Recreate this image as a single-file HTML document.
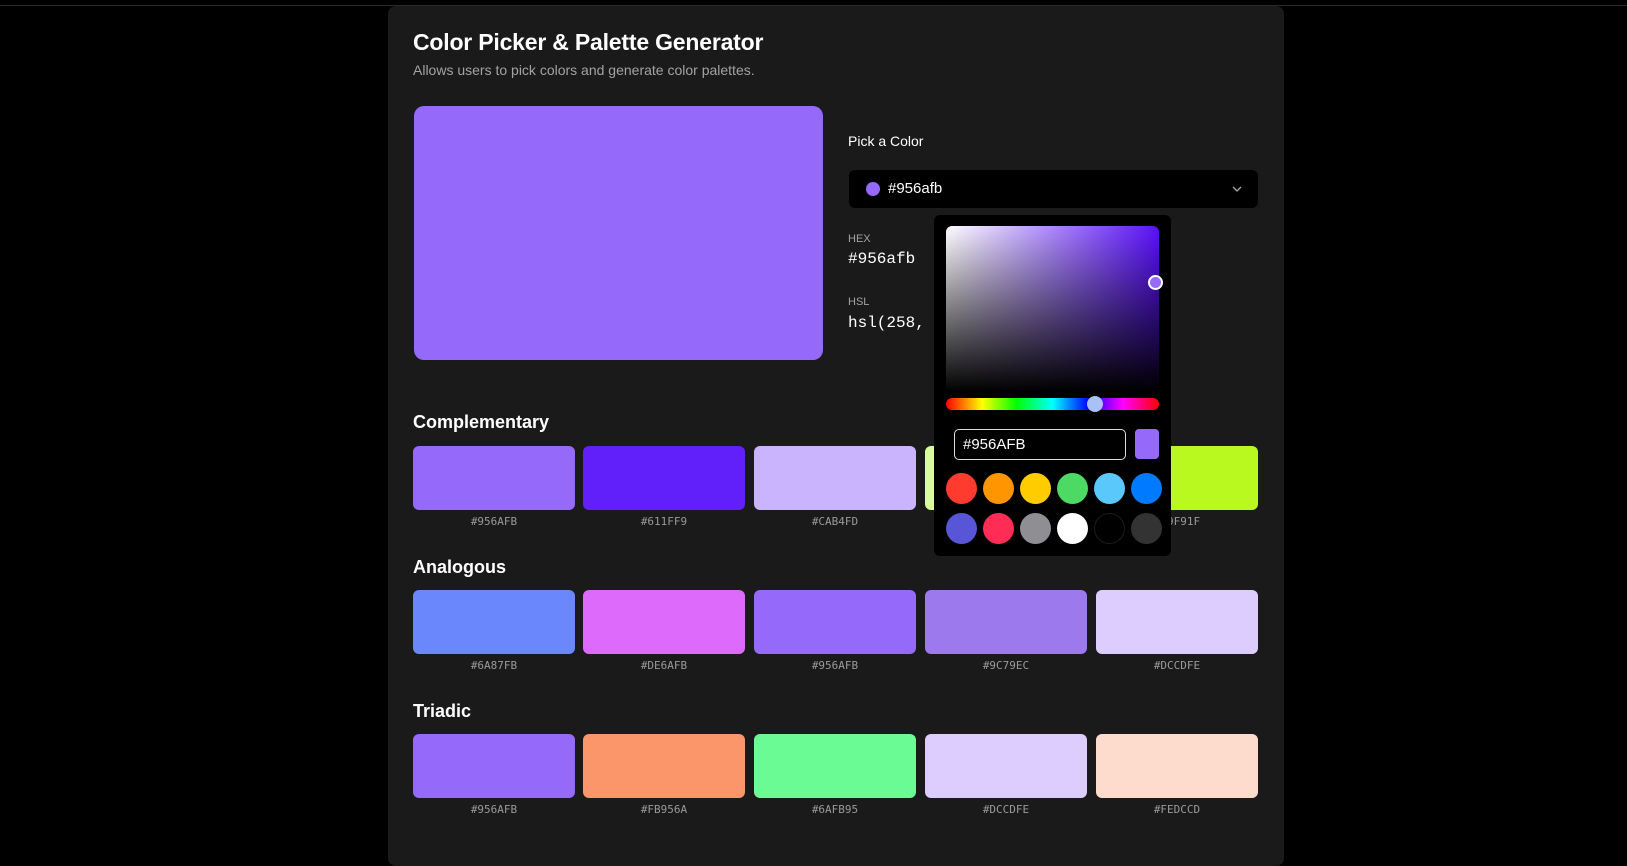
<!DOCTYPE html>
<html><head><meta charset="utf-8"><style>
*{box-sizing:border-box;margin:0;padding:0}
body{width:1627px;height:838px;background:#000;font-family:"Liberation Sans",sans-serif;color:#fff;position:relative;overflow:hidden}
.topline{position:absolute;left:0;right:0;top:5px;height:1px;background:#2a2a2a}
.card{position:absolute;left:388px;top:6px;width:896px;height:860px;background:#1a1a1a;border-radius:8px}
.a{position:absolute}
h1{position:absolute;left:413px;top:29px;font-size:23px;font-weight:bold;letter-spacing:-0.2px}
.sub{left:413px;top:62px;font-size:14px;color:#a3a3a3}
.big{left:414px;top:106px;width:409px;height:254px;background:#956afb;border-radius:10px}
.lbl{font-size:14px;font-weight:normal}
.sel{left:849px;top:170px;width:409px;height:38px;background:#000;border-radius:6px}
.small{font-size:11px;color:#a3a3a3}
.mono{font-family:"Liberation Mono",monospace;font-size:16px}
h2{position:absolute;left:413px;font-size:18px;font-weight:bold}
.sw{position:absolute;width:162px;height:64px;border-radius:6px}
.hx{position:absolute;width:162px;text-align:center;font-family:"DejaVu Sans Mono",monospace;font-size:11px;color:#9a9a9a}
.pop{left:934px;top:215px;width:237px;height:341px;background:#000;border-radius:6px}
.grad{left:946px;top:226px;width:213px;height:166px;border-radius:6px;background:linear-gradient(to bottom,rgba(0,0,0,0),#000),linear-gradient(to right,#fff,#5a11fb)}
.hue{left:946px;top:398px;width:213px;height:12px;border-radius:6px;background:linear-gradient(to right,#f00,#ff0 17%,#0f0 33%,#0ff 50%,#00f 67%,#f0f 83%,#f00)}
.c{position:absolute;width:31px;height:31px;border-radius:50%}
</style></head><body>
<div class="topline"></div>
<div class="card"></div>
<h1>Color Picker &amp; Palette Generator</h1>
<div class="a sub">Allows users to pick colors and generate color palettes.</div>
<div class="a big"></div>
<div class="a lbl" style="left:848px;top:133px">Pick a Color</div>
<div class="a sel">
 <div class="a" style="left:17px;top:12px;width:14px;height:14px;border-radius:50%;background:#956afb"></div>
 <div class="a" style="left:39px;top:10px;font-size:15px">#956afb</div>
 <svg class="a" style="left:382px;top:14px" width="12" height="10" viewBox="0 0 12 10"><path d="M2 3l4 4 4-4" stroke="#aaa" stroke-width="1.3" fill="none"/></svg>
</div>
<div class="a small" style="left:848px;top:233px">HEX</div>
<div class="a mono" style="left:848px;top:250px">#956afb</div>
<div class="a small" style="left:848px;top:296px">HSL</div>
<div class="a mono" style="left:848px;top:314px">hsl(258, 95%, 70%)</div>

<h2 style="top:412px">Complementary</h2>
<div class="sw" style="left:413px;top:446px;background:#956afb"></div><div class="hx" style="left:413px;top:515px">#956AFB</div>
<div class="sw" style="left:583px;top:446px;background:#611ff9"></div><div class="hx" style="left:583px;top:515px">#611FF9</div>
<div class="sw" style="left:754px;top:446px;background:#cab4fd"></div><div class="hx" style="left:754px;top:515px">#CAB4FD</div>
<div class="sw" style="left:925px;top:446px;background:#dafb9c"></div><div class="hx" style="left:925px;top:515px">#DAFB9C</div>
<div class="sw" style="left:1096px;top:446px;background:#b9f91f"></div><div class="hx" style="left:1096px;top:515px">#B9F91F</div>

<h2 style="top:557px">Analogous</h2>
<div class="sw" style="left:413px;top:590px;background:#6a87fb"></div><div class="hx" style="left:413px;top:659px">#6A87FB</div>
<div class="sw" style="left:583px;top:590px;background:#de6afb"></div><div class="hx" style="left:583px;top:659px">#DE6AFB</div>
<div class="sw" style="left:754px;top:590px;background:#956afb"></div><div class="hx" style="left:754px;top:659px">#956AFB</div>
<div class="sw" style="left:925px;top:590px;background:#9c79ec"></div><div class="hx" style="left:925px;top:659px">#9C79EC</div>
<div class="sw" style="left:1096px;top:590px;background:#dccdfe"></div><div class="hx" style="left:1096px;top:659px">#DCCDFE</div>

<h2 style="top:701px">Triadic</h2>
<div class="sw" style="left:413px;top:734px;background:#956afb"></div><div class="hx" style="left:413px;top:803px">#956AFB</div>
<div class="sw" style="left:583px;top:734px;background:#fb956a"></div><div class="hx" style="left:583px;top:803px">#FB956A</div>
<div class="sw" style="left:754px;top:734px;background:#6afb95"></div><div class="hx" style="left:754px;top:803px">#6AFB95</div>
<div class="sw" style="left:925px;top:734px;background:#dccdfe"></div><div class="hx" style="left:925px;top:803px">#DCCDFE</div>
<div class="sw" style="left:1096px;top:734px;background:#fedccd"></div><div class="hx" style="left:1096px;top:803px">#FEDCCD</div>

<div class="a pop"></div>
<div class="a grad"></div>
<div class="a" style="left:1148px;top:275px;width:15px;height:15px;border-radius:50%;border:2px solid #fff;background:#956afb"></div>
<div class="a hue"></div>
<div class="a" style="left:1087px;top:396px;width:16px;height:16px;border-radius:50%;background:#a9c0f8"></div>
<div class="a" style="left:954px;top:429px;width:172px;height:31px;border:1px solid #ddd;border-radius:5px;background:#000"></div>
<div class="a" style="left:963px;top:436px;font-size:15px">#956AFB</div>
<div class="a" style="left:1135px;top:429px;width:24px;height:30px;border-radius:4px;background:#956afb"></div>
<div class="c" style="left:946px;top:473px;background:#ff3b30"></div>
<div class="c" style="left:983px;top:473px;background:#ff9500"></div>
<div class="c" style="left:1020px;top:473px;background:#ffcc00"></div>
<div class="c" style="left:1057px;top:473px;background:#4cd964"></div>
<div class="c" style="left:1094px;top:473px;background:#5ac8fa"></div>
<div class="c" style="left:1131px;top:473px;background:#007aff"></div>
<div class="c" style="left:946px;top:513px;background:#5856d6"></div>
<div class="c" style="left:983px;top:513px;background:#ff2d55"></div>
<div class="c" style="left:1020px;top:513px;background:#8e8e93"></div>
<div class="c" style="left:1057px;top:513px;background:#fff"></div>
<div class="c" style="left:1094px;top:513px;background:#000;border:1px solid #1c1c1c"></div>
<div class="c" style="left:1131px;top:513px;background:#333"></div>
</body></html>
